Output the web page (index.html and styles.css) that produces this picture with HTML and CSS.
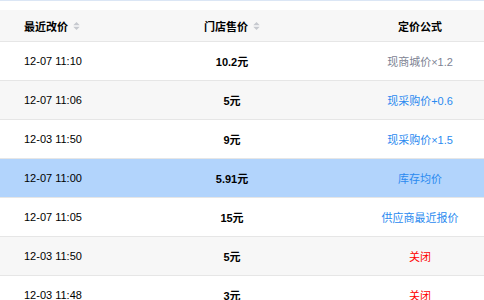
FILE: index.html
```html
<!DOCTYPE html>
<html>
<head>
<meta charset="utf-8">
<link rel="stylesheet" href="styles.css">
</head>
<body>
<div class="topline"></div>
<div class="table">
  <div class="row head">
    <div class="cell c1"><span>最近改价</span><svg class="sort" width="7" height="8" viewBox="0 0 7 8"><path d="M3.5 0 L6.5 3 H0.5 Z" fill="#c6c9cf"/><path d="M3.5 8 L6.5 5 H0.5 Z" fill="#c6c9cf"/><rect x="0.5" y="3.6" width="6" height="0.8" fill="#dadce0"/></svg></div>
    <div class="cell c2"><span>门店售价</span><svg class="sort" width="7" height="8" viewBox="0 0 7 8"><path d="M3.5 0 L6.5 3 H0.5 Z" fill="#c6c9cf"/><path d="M3.5 8 L6.5 5 H0.5 Z" fill="#c6c9cf"/><rect x="0.5" y="3.6" width="6" height="0.8" fill="#dadce0"/></svg></div>
    <div class="cell c3"><span>定价公式</span></div>
  </div>
  <div class="row">
    <div class="cell c1">12-07 11:10</div>
    <div class="cell c2 price">10.2元</div>
    <div class="cell c3 gray">现商城价×1.2</div>
  </div>
  <div class="row stripe">
    <div class="cell c1">12-07 11:06</div>
    <div class="cell c2 price">5元</div>
    <div class="cell c3 blue">现采购价+0.6</div>
  </div>
  <div class="row">
    <div class="cell c1">12-03 11:50</div>
    <div class="cell c2 price">9元</div>
    <div class="cell c3 blue">现采购价×1.5</div>
  </div>
  <div class="row selected">
    <div class="cell c1">12-07 11:00</div>
    <div class="cell c2 price">5.91元</div>
    <div class="cell c3 blue">库存均价</div>
  </div>
  <div class="row">
    <div class="cell c1">12-07 11:05</div>
    <div class="cell c2 price">15元</div>
    <div class="cell c3 blue">供应商最近报价</div>
  </div>
  <div class="row stripe">
    <div class="cell c1">12-03 11:50</div>
    <div class="cell c2 price">5元</div>
    <div class="cell c3 red">关闭</div>
  </div>
  <div class="row">
    <div class="cell c1">12-03 11:48</div>
    <div class="cell c2 price">3元</div>
    <div class="cell c3 red">关闭</div>
  </div>
</div>
</body>
</html>
```
FILE: styles.css
```css
html, body {
  margin: 0;
  padding: 0;
  background: #fff;
  overflow: hidden;
}
body {
  font-family: "Liberation Sans", Arial, "Noto Sans CJK SC", sans-serif;
  font-size: 11px;
  color: #000;
}
.topline {
  height: 1px;
  background: #dbe6f5;
  margin-bottom: 9px;
}
.table {
  display: flex;
  flex-direction: column;
}
.row {
  display: grid;
  grid-template-columns: 108px 248px 128px;
  height: 38px;
  border-bottom: 1px solid #e6e6e6;
  background: #fff;
}
.row.head {
  height: 31px;
  background: #f7f7f7;
  font-weight: bold;
}
.row.stripe {
  background: #f7f7f7;
}
.row.selected {
  background: #b2d4fc;
}
.cell {
  display: flex;
  align-items: center;
  white-space: nowrap;
}
.c1 {
  padding-left: 24px;
}
.c2, .c3 {
  justify-content: center;
}
.sort {
  margin-left: 5px;
  margin-top: 1px;
}
.price {
  font-weight: bold;
}
.gray {
  color: #7d8393;
}
.blue {
  color: #2a8af0;
}
.red {
  color: #f00;
}
```
